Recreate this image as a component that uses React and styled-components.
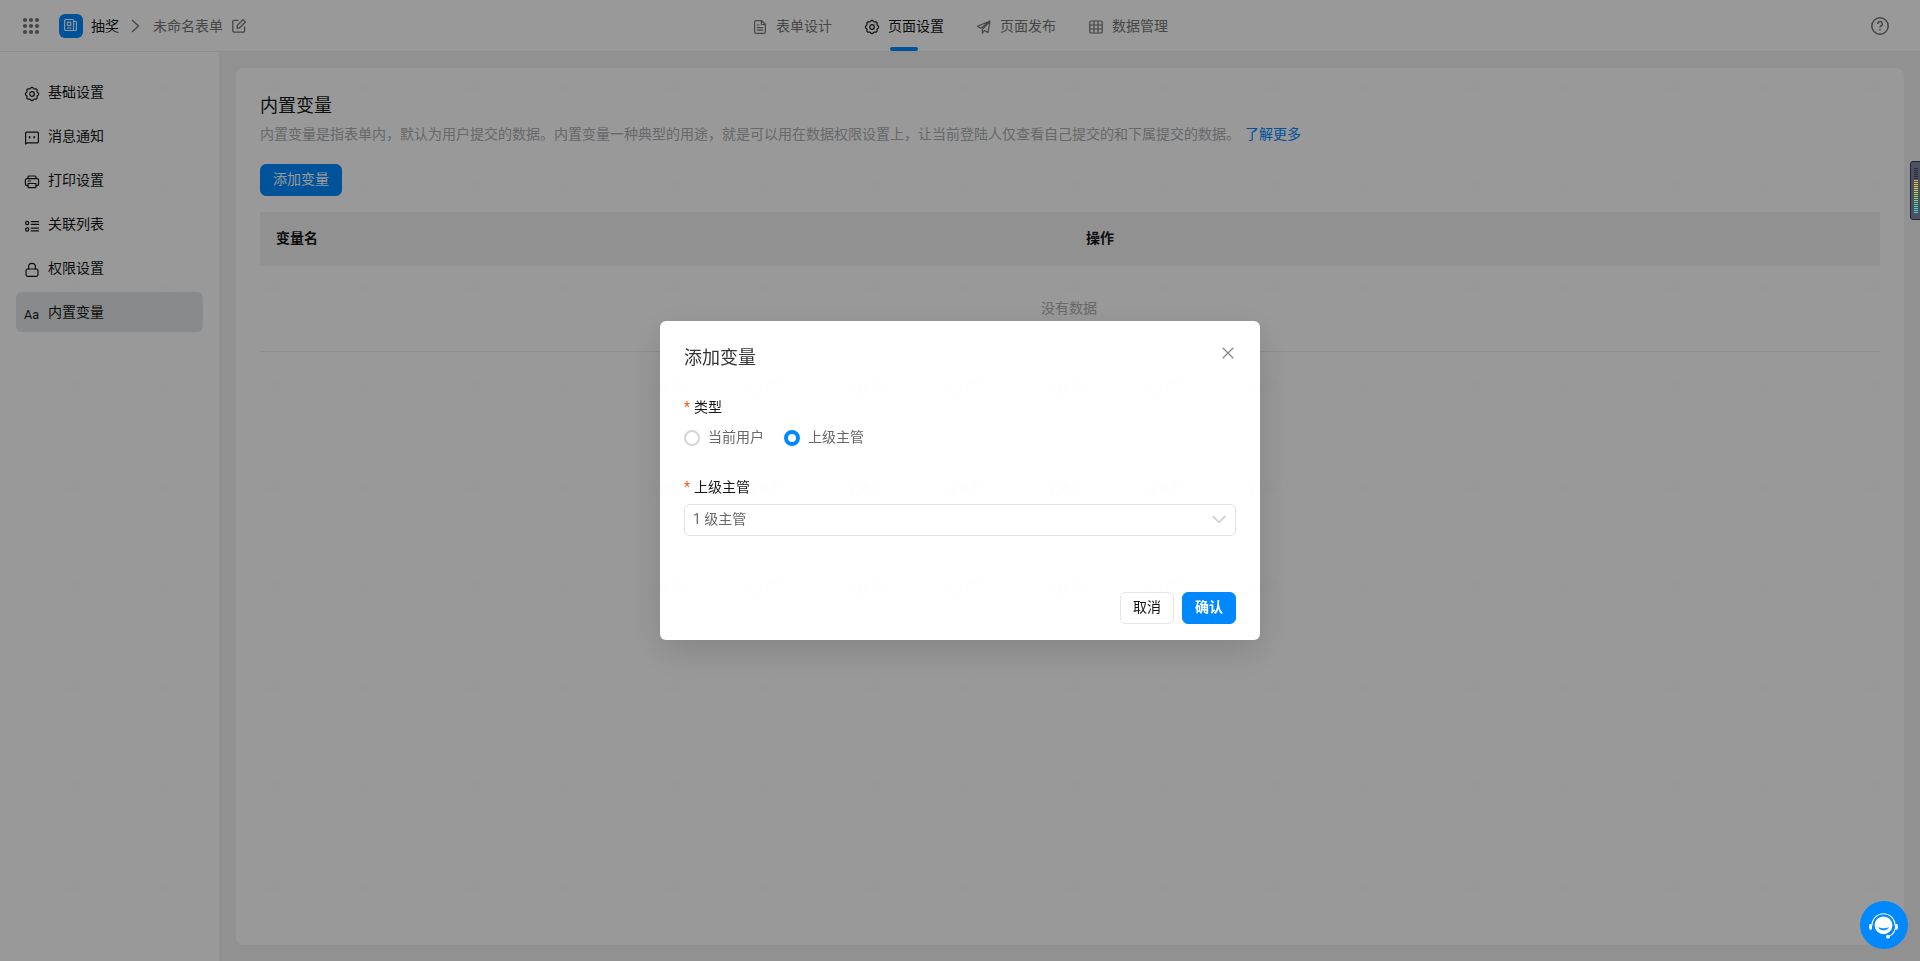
import React, { useState } from 'react';
import styled, { createGlobalStyle } from 'styled-components';

const GlobalStyle = createGlobalStyle`
  * {
    box-sizing: border-box;
  }

  body {
    margin: 0;
    background: #f2f2f2;
    color: #141617;
    font-family: Roboto, 'Noto Sans CJK SC', sans-serif;
    font-size: 14px;
    line-height: 22px;
    overflow: hidden;
  }

  button {
    font-family: inherit;
  }
`;

const Page = styled.div`
  height: 100vh;
  display: flex;
  flex-direction: column;
`;

const Header = styled.header`
  height: 52px;
  flex: none;
  display: grid;
  grid-template-columns: 1fr auto 1fr;
  background: #fff;
  border-bottom: 1px solid #ececec;
`;

const Breadcrumb = styled.div`
  display: flex;
  align-items: center;
  padding-left: 22px;
`;

const AppLogo = styled.div`
  width: 24px;
  height: 24px;
  margin: 0 8px 0 19px;
  border-radius: 6px;
  background: #0089ff;
  display: flex;
  align-items: center;
  justify-content: center;
`;

const Crumb = styled.span`
  color: ${({ $muted }) => ($muted ? '#747677' : '#141617')};
`;

const Separator = styled.svg`
  margin: 0 13px 0 12px;
`;

const EditIcon = styled.svg`
  margin-left: 8px;
`;

const Tabs = styled.nav`
  display: flex;
  gap: 32px;
`;

const Tab = styled.button`
  height: 51px;
  display: flex;
  align-items: center;
  gap: 8px;
  padding: 0;
  border: 0;
  background: none;
  font-size: 14px;
  line-height: 22px;
  color: ${({ $active }) => ($active ? '#141617' : '#747677')};
  position: relative;

  svg {
    margin-top: 2px;
  }

  &::after {
    content: '';
    display: ${({ $active }) => ($active ? 'block' : 'none')};
    position: absolute;
    left: 26px;
    bottom: 0;
    width: 28px;
    height: 4px;
    border-radius: 2px;
    background: #0089ff;
  }
`;

const HeaderRight = styled.div`
  display: flex;
  align-items: center;
  justify-content: flex-end;
  padding-right: 31px;
  color: #747677;
`;

const Body = styled.div`
  flex: 1;
  display: flex;
  min-height: 0;
`;

const Sidebar = styled.aside`
  width: 219px;
  flex: none;
  padding: 20px 16px;
  background: #fff;
  display: flex;
  flex-direction: column;
  gap: 4px;
`;

const MenuItem = styled.div`
  height: 40px;
  display: flex;
  align-items: center;
  gap: 8px;
  padding: 0 8px 1px;
  border-radius: 6px;
  background: ${({ $active }) => ($active ? '#e5e7e9' : 'transparent')};

  svg {
    margin-top: 5px;
  }
`;

const Content = styled.main`
  flex: 1;
  margin: 16px 16px 16px 17px;
  padding: 24px;
  border-radius: 8px;
  background: #fff;
`;

const Title = styled.h1`
  margin: 0;
  font-size: 18px;
  line-height: 28px;
  font-weight: 400;
`;

const Description = styled.p`
  margin: 3px 0 19px;
  line-height: 22px;
  color: #acadaf;

  a {
    margin-left: 5px;
    color: #0089ff;
  }
`;

const Button = styled.button`
  height: 32px;
  padding: 0 12px 2px;
  border: 1px solid ${({ $primary }) => ($primary ? '#0089ff' : '#e5e6e8')};
  border-radius: 6px;
  background: ${({ $primary }) => ($primary ? '#0089ff' : '#fff')};
  color: ${({ $primary }) => ($primary ? '#fff' : '#141617')};
  font-size: 14px;
  line-height: 20px;
  font-weight: ${({ $bold }) => ($bold ? 700 : 400)};
`;

const Table = styled.div`
  margin-top: 16px;
`;

const TableHead = styled.div`
  height: 54px;
  padding-bottom: 2px;
  display: grid;
  grid-template-columns: 1fr 1fr;
  align-items: center;
  background: #f2f2f2;
  font-weight: 700;

  span {
    padding-left: 16px;
  }
`;

const Empty = styled.div`
  height: 86px;
  padding: 0 2px 2px 0;
  display: flex;
  align-items: center;
  justify-content: center;
  border-bottom: 1px solid #ececec;
  color: #acadaf;
`;

const Mask = styled.div`
  position: fixed;
  inset: 0;
  background: rgba(0, 0, 0, 0.4);
`;

const Modal = styled.div`
  position: absolute;
  top: 321px;
  left: 660px;
  width: 600px;
  height: 319px;
  padding: 23px 24px 16px;
  border-radius: 6px;
  background: #fff;
  box-shadow: 0 12px 36px rgba(0, 0, 0, 0.14);
  display: flex;
  flex-direction: column;
`;

const ModalHeader = styled.div`
  height: 28px;
  display: flex;
  justify-content: space-between;
  font-size: 18px;
  line-height: 28px;
  color: #323334;
`;

const CloseIcon = styled.svg`
  margin: 3px 2px 0 0;
`;

const Field = styled.div`
  margin-top: ${({ $top }) => $top}px;
`;

const Label = styled.div`
  line-height: 22px;

  &::before {
    content: '*';
    display: inline-block;
    width: 10px;
    color: #ff5219;
  }
`;

const RadioGroup = styled.div`
  height: 24px;
  margin-top: 8px;
  display: flex;
  gap: 20px;
`;

const RadioLabel = styled.label`
  display: flex;
  align-items: center;
  gap: 8px;
  padding-bottom: 2px;
  color: #66686a;
`;

const Radio = styled.span`
  width: 16px;
  height: 16px;
  margin-top: 2px;
  border-radius: 50%;
  border: ${({ $checked }) => ($checked ? '4px solid #0089ff' : '2px solid #d3d5d8')};
`;

const Select = styled.div`
  height: 32px;
  margin-top: 6px;
  padding: 0 9px 2px 8px;
  display: flex;
  align-items: center;
  justify-content: space-between;
  border: 1px solid #e3e4e6;
  border-radius: 6px;
  color: #66686a;

  svg {
    margin-top: 1px;
  }
`;

const Footer = styled.div`
  margin-top: auto;
  display: flex;
  justify-content: flex-end;
  gap: 8px;
`;

const Meter = styled.svg`
  position: fixed;
  top: 161px;
  right: 0;
`;

const Support = styled.div`
  position: fixed;
  right: 12px;
  bottom: 12px;
  width: 48px;
  height: 48px;
  border-radius: 50%;
  background: #0089ff;
`;

const Watermark = styled.svg`
  position: fixed;
  inset: 0;
  pointer-events: none;
`;

const Icon = ({ size = 16, width = 1.2, children }) => (
  <svg
    width={size}
    height={size}
    viewBox="0 0 16 16"
    fill="none"
    stroke="currentColor"
    strokeWidth={width}
    strokeLinecap="round"
    strokeLinejoin="round"
  >
    {children}
  </svg>
);

// outline with eight rounded teeth
const gearPath =
  Array.from({ length: 96 }, (_, i) => {
    const angle = (i / 96) * Math.PI * 2;
    const r = 6.1 + 0.55 * Math.cos(angle * 8);
    const x = (8 + r * Math.cos(angle)).toFixed(2);
    const y = (8 + r * Math.sin(angle)).toFixed(2);
    return `${i ? 'L' : 'M'}${x} ${y}`;
  }).join('') + 'Z';

const icons = {
  gear: (
    <>
      <path d={gearPath} />
      <circle cx="8" cy="8" r="2.3" />
    </>
  ),
  message: (
    <>
      <path d="M1.6 14V3.2a1 1 0 0 1 1-1h10.8a1 1 0 0 1 1 1v8.6a1 1 0 0 1-1 1H3.4Z" />
      <path d="M5.6 6.9v.8M10.2 6.9v.8" strokeWidth="1.6" />
    </>
  ),
  printer: (
    <>
      <path d="M4 4.6V3a1 1 0 0 1 1-1h6a1 1 0 0 1 1 1v1.6M4 11.6H3a1.6 1.6 0 0 1-1.6-1.6V6.2a1.6 1.6 0 0 1 1.6-1.6h10a1.6 1.6 0 0 1 1.6 1.6V10a1.6 1.6 0 0 1-1.6 1.6h-1" />
      <path d="M4 9.5h8v3.2a1 1 0 0 1-1 1H5a1 1 0 0 1-1-1ZM4.2 7h2.4" />
    </>
  ),
  list: (
    <>
      <circle cx="3.2" cy="5" r="1.6" />
      <circle cx="3.2" cy="11.5" r="1.6" />
      <path d="M7.3 3.6h7.3M7.3 6.4h7.3M7.3 10.1h7.3M7.3 12.9h7.3" />
    </>
  ),
  lock: (
    <>
      <rect x="2" y="7" width="12" height="7.4" rx="1.8" />
      <path d="M4.6 7V4.8a3.4 3.4 0 0 1 6.8 0V7" />
    </>
  ),
  form: (
    <>
      <path d="M9.4 1.6H4A1.4 1.4 0 0 0 2.6 3v10A1.4 1.4 0 0 0 4 14.4h8a1.4 1.4 0 0 0 1.4-1.4V5.3Z" />
      <path d="M9.4 1.8v3.7h3.8M5.2 6h2M5.2 8.6h5.6M5.2 11.2h5.6" />
    </>
  ),
  plane: (
    <path d="M14 2 1.4 7.2 5 9.3 14 2 6.4 10.4V14.2L8.5 11.4 12 13.4Z" />
  ),
  grid: (
    <>
      <rect x="1.8" y="2" width="12.4" height="12" rx="1.3" />
      <path d="M6 2v12M10 2v12M1.8 6h12.4M1.8 10h12.4" />
    </>
  ),
};

const tabs = [
  { icon: 'form', text: '表单设计' },
  { icon: 'gear', text: '页面设置' },
  { icon: 'plane', text: '页面发布' },
  { icon: 'grid', text: '数据管理' },
];

const menu = [
  { icon: 'gear', text: '基础设置' },
  { icon: 'message', text: '消息通知' },
  { icon: 'printer', text: '打印设置' },
  { icon: 'list', text: '关联列表' },
  { icon: 'lock', text: '权限设置' },
  { icon: 'text', text: '内置变量' },
];

const TextIcon = styled.span`
  width: 16px;
  margin-top: 6px;
  font-family: Roboto, sans-serif;
  font-size: 12.5px;
  line-height: 16px;
`;

const AppsIcon = () => (
  <svg width="18" height="18" viewBox="0 0 18 18" fill="#747677">
    {[3, 9, 15].map((y) =>
      [3, 9, 15].map((x) => <circle key={`${x}-${y}`} cx={x} cy={y} r="2.1" />)
    )}
  </svg>
);

const meterColors = [
  '#272c35', '#272c35', '#272c35', '#272c35', '#272c35', '#272c35',
  '#f3b32c', '#f0c02e', '#eccb32', '#e6d837', '#d6dc40', '#c8df49',
  '#b7e052', '#a6e05c', '#96df68', '#86de74', '#77de82', '#69dd90',
  '#5ddb9e', '#52dbac', '#48dbba', '#40dcc8', '#3adfd4',
];

const App = () => {
  const [type, setType] = useState('上级主管');

  return (
    <Page>
      <GlobalStyle />
      <Header>
        <Breadcrumb>
          <AppsIcon />
          <AppLogo>
            <svg width="16" height="16" viewBox="0 0 16 16" fill="none" stroke="#fff" strokeWidth="1.1">
              <rect x="1.6" y="1.5" width="9" height="11" rx="1.3" />
              <path d="M10.6 3.2h1.8a1 1 0 0 1 1 1v7.3a1 1 0 0 1-1 1H9M4 10h4.4" />
              <rect x="4.4" y="4.2" width="3.4" height="3.2" />
            </svg>
          </AppLogo>
          <Crumb>抽奖</Crumb>
          <Separator width="9" height="14" viewBox="0 0 9 14" fill="none" stroke="#747677" strokeWidth="1.4">
            <path d="M1 1l6.5 6L1 13" />
          </Separator>
          <Crumb $muted>未命名表单</Crumb>
          <EditIcon width="16" height="16" viewBox="0 0 16 16" fill="none" stroke="#747677" strokeWidth="1.3">
            <path d="M7.5 2.4H3.2a1.4 1.4 0 0 0-1.4 1.4v9a1.4 1.4 0 0 0 1.4 1.4h9a1.4 1.4 0 0 0 1.4-1.4V8.4" />
            <path d="M6.2 10V7.6L12 1.6l2.4 2.3-6 6.1Z" />
          </EditIcon>
        </Breadcrumb>
        <Tabs>
          {tabs.map(({ icon, text }) => (
            <Tab key={text} $active={text === '页面设置'}>
              <Icon>{icons[icon]}</Icon>
              {text}
            </Tab>
          ))}
        </Tabs>
        <HeaderRight>
          <svg width="18" height="18" viewBox="0 0 18 18" fill="none" stroke="currentColor" strokeWidth="1.5">
            <circle cx="9" cy="9" r="8.2" />
            <path d="M6.7 7a2.3 2.3 0 1 1 3.3 2c-.7.4-1 .8-1 1.6M9 12v1.6" />
          </svg>
        </HeaderRight>
      </Header>

      <Body>
        <Sidebar>
          {menu.map(({ icon, text }) => (
            <MenuItem key={text} $active={text === '内置变量'}>
              {icon === 'text' ? <TextIcon>Aa</TextIcon> : <Icon>{icons[icon]}</Icon>}
              {text}
            </MenuItem>
          ))}
        </Sidebar>
        <Content>
          <Title>内置变量</Title>
          <Description>
            内置变量是指表单内，默认为用户提交的数据。内置变量一种典型的用途，就是可以用在数据权限设置上，让当前登陆人仅查看自己提交的和下属提交的数据。
            <a>了解更多</a>
          </Description>
          <Button $primary>添加变量</Button>
          <Table>
            <TableHead>
              <span>变量名</span>
              <span>操作</span>
            </TableHead>
            <Empty>没有数据</Empty>
          </Table>
        </Content>
      </Body>

      <Mask>
        <Modal>
          <ModalHeader>
            添加变量
            <CloseIcon width="12" height="12" viewBox="0 0 12 12" stroke="#84888c" strokeWidth="1.3">
              <path d="M.7.7l10.6 10.6M11.3.7.7 11.3" />
            </CloseIcon>
          </ModalHeader>
          <Field $top={24}>
            <Label>类型</Label>
            <RadioGroup>
              {['当前用户', '上级主管'].map((name) => (
                <RadioLabel key={name} onClick={() => setType(name)}>
                  <Radio $checked={type === name} />
                  {name}
                </RadioLabel>
              ))}
            </RadioGroup>
          </Field>
          <Field $top={26}>
            <Label>上级主管</Label>
            <Select>
              1 级主管
              <svg width="14" height="9" viewBox="0 0 14 9" fill="none" stroke="#cfd1d4" strokeWidth="1.8">
                <path d="M.7 1 7 7.3 13.3 1" />
              </svg>
            </Select>
          </Field>
          <Footer>
            <Button>取消</Button>
            <Button $primary $bold>确认</Button>
          </Footer>
        </Modal>
      </Mask>

      <Watermark width="100%" height="100%">
        <defs>
          <pattern id="mark" y="-2" width="100" height="100" patternUnits="userSpaceOnUse">
            <text x="48" y="99" fontSize="12" fill="#000" fillOpacity="0.008" transform="rotate(-15 48 99)">
              王林杰
            </text>
          </pattern>
        </defs>
        <rect width="100%" height="100%" fill="url(#mark)" />
      </Watermark>

      <Meter width="10" height="60" viewBox="0 0 10 60">
        <path d="M11 .5H3A2.5 2.5 0 0 0 .5 3v53A2.5 2.5 0 0 0 3 58.5h8Z" fill="#4b5162" stroke="#20242d" />
        {meterColors.map((color, i) => (
          <rect key={i} x="4" y={7 + i * 2} width="4" height="1" fill={color} />
        ))}
      </Meter>

      <Support>
        <svg width="48" height="48" viewBox="0 0 48 48" fill="none" stroke="#fff">
          <circle cx="23.5" cy="24.3" r="8.9" fill="#fff" stroke="none" />
          <path d="M12 24.5a11.5 11.8 0 0 1 23 0" strokeWidth="1.1" />
          <path d="M10.6 24.4v3M36.4 24.4v3" strokeWidth="2.8" strokeLinecap="round" />
          <path d="M35.2 27.5c-.8 4-3 6.8-7 8" strokeWidth="1.2" />
          <circle cx="28" cy="35.7" r="1.9" fill="#fff" stroke="none" />
          <path d="M18.6 26.8c2.5 3 7.3 3 9.8 0-3 1.1-6.8 1.1-9.8 0Z" fill="#0089ff" stroke="#0089ff" strokeWidth=".7" />
        </svg>
      </Support>
    </Page>
  );
};

export default App;
